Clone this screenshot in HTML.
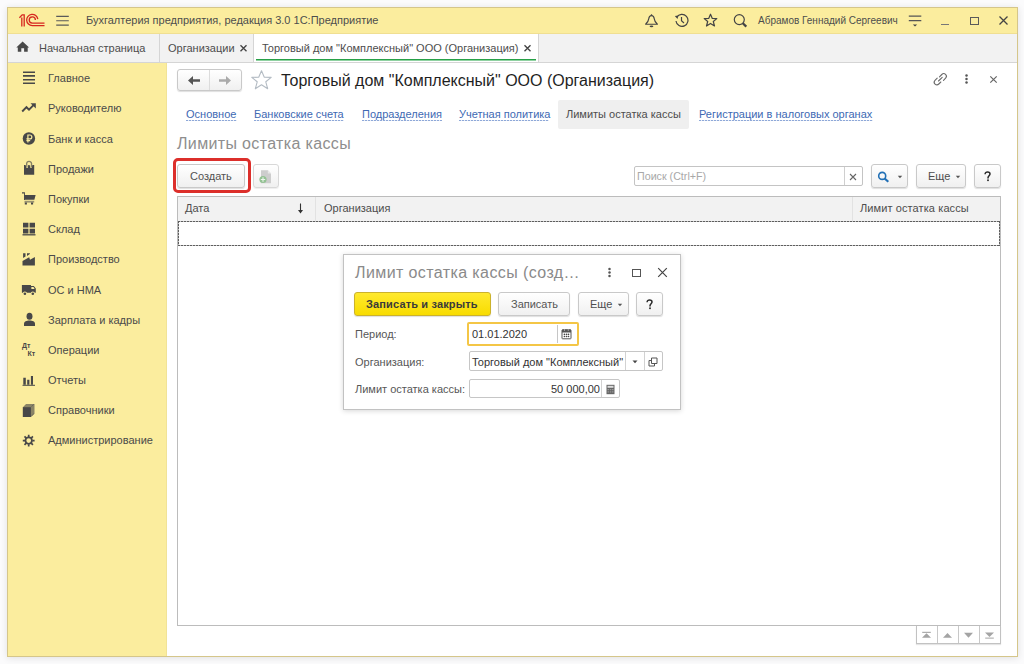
<!DOCTYPE html>
<html><head><meta charset="utf-8">
<style>
*{box-sizing:border-box;margin:0;padding:0}
html,body{width:1024px;height:664px;overflow:hidden;background:#fbfbfc;font-family:"Liberation Sans",sans-serif;color:#4d4d4d}
body{position:relative}
div,span,svg{position:absolute}
.t{white-space:nowrap;font-size:11px;line-height:13px}
.h{white-space:nowrap;font-size:16px;line-height:20px}
.si{left:48px;font-size:11px;line-height:13px;color:#4a4a4a;white-space:nowrap}
.btn{border:1px solid #c9c9c9;border-radius:3px;background:linear-gradient(#ffffff,#f0f0f0);box-shadow:0 1px 1px rgba(0,0,0,0.13)}
.lnk{font-size:11px;line-height:13px;color:#4069b3;white-space:nowrap}
.ul{height:1px;background:repeating-linear-gradient(90deg,#8ea8d8 0 2px,#e6ecf7 2px 3px)}
.vl{width:1px}
</style></head><body>
<!-- window frame -->
<div style="left:7px;top:7px;width:1011px;height:650px;border:1px solid #d5c68a;background:#fff;box-shadow:0 1px 7px rgba(0,0,0,0.11)"></div>
<!-- title bar -->
<div style="left:8px;top:8px;width:1009px;height:26px;background:#fbed9e;border-bottom:1px solid #f0df92"></div>
<!-- tabs bar -->
<div style="left:8px;top:34px;width:1009px;height:29px;background:#f2f2f2;border-bottom:1px solid #d5d5d5"></div>
<!-- sidebar -->
<div style="left:8px;top:63px;width:159px;height:593px;background:#fbed9e;border-right:1px solid #f1e397"></div>

<!-- title content -->
<svg style="left:17px;top:12px" width="30" height="17" viewBox="0 0 30 17">
 <g fill="none" stroke="#d6261f" stroke-width="1.3">
  <path d="M2.4 5.8 L5.2 2.8 L7.2 2.8 L7.2 14.4"/>
  <path d="M4.8 5.4 L4.8 14.4"/>
  <path d="M20.8 7.2 A5.6 5.6 0 1 0 15.3 13.6 L27.5 13.6"/>
  <path d="M18.4 7.9 A3.1 3.1 0 1 0 15.3 11.1 L27.5 11.1"/>
 </g>
</svg>
<svg style="left:55px;top:14px" width="15" height="13" viewBox="0 0 15 13">
 <g stroke="#5a5a5a" stroke-width="1.15"><path d="M1.2 2.4H13.8M1.2 6.7H13.8M1.2 11.1H13.8"/></g>
</svg>
<div class="t" style="left:86px;top:14px;color:#4d4d4d">Бухгалтерия предприятия, редакция 3.0 1С:Предприятие</div>

<!-- bell -->
<svg style="left:644px;top:13px" width="15" height="15" viewBox="0 0 15 15"><path d="M7.5 2.6 C5.6 2.6 5 3.8 4.8 5.6 C4.5 8.2 3.4 9.6 1.6 11.2 H13.4 C11.6 9.6 10.5 8.2 10.2 5.6 C10 3.8 9.4 2.6 7.5 2.6Z" fill="none" stroke="#444" stroke-width="1.15" stroke-linejoin="round"/><path d="M6.4 2.2 L7.5 0.9 L8.6 2.2Z" fill="#444"/><ellipse cx="7.5" cy="13.3" rx="1.9" ry="0.85" fill="#444"/></svg>
<!-- history -->
<svg style="left:674px;top:13px" width="15" height="15" viewBox="0 0 15 15">
 <g fill="none" stroke="#444" stroke-width="1.2"><path d="M2.8 4.3 A6 6 0 1 1 2 8"/><path d="M7.5 4 V7.8 L10 10"/></g>
 <path d="M0.8 3 L4.3 2.6 L3.5 6Z" fill="#444"/>
</svg>
<!-- star -->
<svg style="left:703px;top:13px" width="15" height="15" viewBox="0 0 15 15">
 <path d="M7.5 1.2 L9.3 5.4 L13.8 5.6 L10.3 8.5 L11.5 13 L7.5 10.4 L3.5 13 L4.7 8.5 L1.2 5.6 L5.7 5.4Z" fill="none" stroke="#444" stroke-width="1.2" stroke-linejoin="round"/>
</svg>
<!-- search -->
<svg style="left:733px;top:13px" width="15" height="15" viewBox="0 0 15 15">
 <circle cx="6.3" cy="6.6" r="5" fill="none" stroke="#444" stroke-width="1.2"/>
 <path d="M9.8 10.2 L13.3 13.6" stroke="#444" stroke-width="2.2"/>
</svg>
<div class="t" style="left:758px;top:15px;font-size:10px;line-height:12px;color:#4d4d4d">Абрамов Геннадий Сергеевич</div>
<!-- menu -->
<svg style="left:907px;top:13px" width="16" height="15" viewBox="0 0 16 15">
 <g stroke="#555" stroke-width="1.2"><path d="M1.8 3.2H14.3M1.8 7.6H14.3"/></g>
 <path d="M5.8 11.4 H10.2 L8 13.6Z" fill="#444"/>
</svg>
<!-- minimize -->
<div style="left:941px;top:23.5px;width:8px;height:1.5px;background:#777"></div>
<!-- maximize -->
<div style="left:970px;top:17px;width:9px;height:8px;border:1.3px solid #5a5a5a"></div>
<!-- close -->
<svg style="left:998px;top:15px" width="11" height="11" viewBox="0 0 11 11">
 <path d="M1.5 1.5 L9.5 9.5 M9.5 1.5 L1.5 9.5" stroke="#444" stroke-width="1.3"/>
</svg>

<!-- tabs -->
<svg style="left:16px;top:41px" width="14" height="12" viewBox="0 0 14 12">
 <path d="M6.6 0.6 L13.1 6.6 H11.7 V10.7 H8.1 V7.3 H5.3 V10.7 H1.8 V6.6 H0.3Z" fill="#484848"/>
</svg>
<div class="t" style="left:39px;top:42px;color:#4d4d4d">Начальная страница</div>
<div class="vl" style="left:159px;top:34px;height:28px;background:#d5d5d5"></div>
<div class="t" style="left:168px;top:42px">Организации</div>
<svg style="left:239px;top:44px" width="9" height="9" viewBox="0 0 9 9"><path d="M1.5 1.2L7.5 7.2M7.5 1.2L1.5 7.2" stroke="#444" stroke-width="1.35"/></svg>
<div style="left:253px;top:34px;width:286px;height:28px;background:#fff;border-left:1px solid #d5d5d5;border-right:1px solid #d5d5d5"></div>
<div style="left:256px;top:59px;width:280px;height:1px;background:#27a047"></div><div style="left:256px;top:60px;width:280px;height:1px;background:#8fd1a1"></div>
<div class="t" style="left:262px;top:42px">Торговый дом "Комплексный" ООО (Организация)</div>
<svg style="left:523px;top:44px" width="9" height="9" viewBox="0 0 9 9"><path d="M1.5 1.2L7.5 7.2M7.5 1.2L1.5 7.2" stroke="#444" stroke-width="1.35"/></svg>

<!-- sidebar items -->
<svg style="left:22px;top:71px" width="14" height="14" viewBox="0 0 14 14"><g stroke="#484848" stroke-width="1.6"><path d="M1 1.2H13M1 4.9H13M1 8.7H13M1 12.3H13"/></g></svg>
<div class="si" style="top:72px">Главное</div>
<svg style="left:21px;top:102px" width="16" height="11" viewBox="0 0 16 11"><path d="M1.2 9.5 L5.5 5.2 L8 7.6 L13 2.6" fill="none" stroke="#484848" stroke-width="1.9"/><path d="M9.5 1.2 H14.8 V6.5Z" fill="#484848"/></svg>
<div class="si" style="top:102px">Руководителю</div>
<svg style="left:22px;top:131px" width="14" height="15" viewBox="0 0 14 15"><circle cx="6.9" cy="7.5" r="6.2" fill="#484848"/><g fill="none" stroke="#fbed9e" stroke-width="1.2"><path d="M5.9 11.6 V4 H7.9 A1.95 1.95 0 0 1 7.9 7.9 H4.4 M4.4 9.6 H8.2"/></g></svg>
<div class="si" style="top:133px">Банк и касса</div>
<svg style="left:23px;top:160px" width="13" height="16" viewBox="0 0 13 16"><path d="M1 5.1 H2.6 L3.4 8 H4.9 L5.2 5.1 H6.6 L7.4 8 H8.9 L9.3 5.1 H11.2 V14.7 H1Z" fill="#484848"/><path d="M4 7.6 L3.6 3.6 Q3.8 1.3 6 1.3 Q8.2 1.3 8.6 3.6 L8.2 7.6" fill="none" stroke="#858064" stroke-width="1.3"/></svg>
<div class="si" style="top:163px">Продажи</div>
<svg style="left:21px;top:191px" width="16" height="15" viewBox="0 0 16 15"><path d="M1 1.2 H3.9 V9 H3 V2.5 H1Z" fill="#484848"/><path d="M3.1 4 H14.6 L13.4 8.8 H3.1Z" fill="#484848"/><path d="M3.5 9.8 H13.2 V11.6 H3.5Z" fill="#9a9370"/><path d="M3.8 11.4 H5.9 V13.6 H3.8Z M10 11.4 H12.1 V13.6 H10Z" fill="#484848"/></svg>
<div class="si" style="top:193px">Покупки</div>
<svg style="left:22px;top:222px" width="14" height="14" viewBox="0 0 14 14"><path d="M1 0.8 H6.4 V5.6 H1Z M7.6 0.8 H13 V5.6 H7.6Z M1 6.8 H6.4 V11.4 H1Z M7.6 6.8 H13 V11.4 H7.6Z" fill="#484848"/><path d="M0.5 12.8 H13.5" stroke="#484848" stroke-width="1.3"/></svg>
<div class="si" style="top:223px">Склад</div>
<svg style="left:22px;top:252px" width="14" height="14" viewBox="0 0 14 14"><path d="M0.5 9 L7.2 5.2 L8 7.7 L12.9 5 V13.4 H0.5Z" fill="#484848"/><path d="M1.1 1.2 H3.5 V4.6 L1.1 5.9Z M5 1.2 H7.9 V1.9 L5 3.9Z" fill="#484848"/></svg>
<div class="si" style="top:253px">Производство</div>
<svg style="left:21px;top:284px" width="16" height="12" viewBox="0 0 16 12"><path d="M0.9 1.1 H9.95 V2 H12.8 L14.8 4.5 V8.65 H0.9Z" fill="#484848"/><path d="M10.4 2.9 H12.5 L13.6 5 H10.4Z" fill="#fbed9e"/><circle cx="3.9" cy="9.7" r="2.1" fill="#fbed9e"/><circle cx="11.8" cy="9.7" r="2.1" fill="#fbed9e"/><circle cx="3.9" cy="9.7" r="1.3" fill="#484848"/><circle cx="11.8" cy="9.7" r="1.3" fill="#484848"/></svg>
<div class="si" style="top:284px">ОС и НМА</div>
<svg style="left:23px;top:312px" width="13" height="15" viewBox="0 0 13 15"><ellipse cx="6.5" cy="4.3" rx="3" ry="3.5" fill="#484848"/><path d="M1 14 V11.8 C1 9.5 3.5 8.6 6.5 8.6 C9.5 8.6 12 9.5 12 11.8 V14Z" fill="#484848"/></svg>
<div class="si" style="top:314px">Зарплата и кадры</div>
<div style="left:22px;top:342px;font:bold 7px/8px 'Liberation Sans';color:#484848">Дт</div>
<div style="left:27.5px;top:350px;font:bold 7px/8px 'Liberation Sans';color:#484848">Кт</div>
<div class="si" style="top:344px">Операции</div>
<svg style="left:22px;top:374px" width="14" height="12" viewBox="0 0 14 12"><path d="M1.3 3.8 H3.8 V10.8 H1.3Z M5.2 5.8 H7.4 V10.8 H5.2Z M8.9 2.1 H11 V10.8 H8.9Z" fill="#484848"/><path d="M0.5 11.3 H13" stroke="#484848" stroke-width="1"/></svg>
<div class="si" style="top:374px">Отчеты</div>
<svg style="left:22px;top:403px" width="14" height="15" viewBox="0 0 14 15"><path d="M0.9 4.2 H8.9 V14 H0.9Z" fill="#484848"/><path d="M0.9 4.2 L4 1 H12.5 V10.8 L8.9 14 Z" fill="#8a8466"/><path d="M0.9 4.2 H8.9 V14 H0.9Z" fill="#484848"/><path d="M9.5 3.5 L11.8 1.3 M9.5 13 L11.8 10.8" stroke="#555" stroke-width="0.6"/></svg>
<div class="si" style="top:404px">Справочники</div>
<svg style="left:22px;top:434px" width="14" height="14" viewBox="0 0 14 14"><circle cx="6.7" cy="6.6" r="3.2" fill="none" stroke="#484848" stroke-width="1.7"/><g stroke="#484848" stroke-width="1.7"><path d="M6.7 0.7V3M6.7 10.2V12.5M0.8 6.6H3.1M10.3 6.6H12.6M2.5 2.4L4.2 4.1M9.2 9.1L10.9 10.8M2.5 10.8L4.2 9.1M9.2 4.1L10.9 2.4"/></g></svg>
<div class="si" style="top:434px">Администрирование</div>

<!-- content header -->
<div class="btn" style="left:177px;top:69px;width:65px;height:22px"></div>
<div class="vl" style="left:209px;top:70px;height:20px;background:#dcdcdc"></div>
<svg style="left:187px;top:75px" width="14" height="11" viewBox="0 0 14 11"><path d="M1 5.5 L6 1 V4.2 H13 V6.8 H6 V10Z" fill="#555"/></svg>
<svg style="left:218px;top:75px" width="14" height="11" viewBox="0 0 14 11"><path d="M13 5.5 L8 1 V4.2 H1 V6.8 H8 V10Z" fill="#aaa"/></svg>
<svg style="left:250px;top:69px" width="23" height="22" viewBox="0 0 23 22"><path d="M11.5 1.8 L14.3 8.2 L21.2 8.4 L15.8 12.8 L17.7 19.8 L11.5 15.8 L5.3 19.8 L7.2 12.8 L1.8 8.4 L8.7 8.2Z" fill="none" stroke="#b4bcc4" stroke-width="1.1" stroke-linejoin="round"/></svg>
<div class="h" style="left:281px;top:71px;color:#1f1f1f">Торговый дом "Комплексный" ООО (Организация)</div>
<svg style="left:932px;top:72px" width="17" height="15" viewBox="0 0 17 15"><g fill="none" stroke="#6a6a6a" stroke-width="1.1" stroke-linecap="round"><path d="M7.5 4.8 L9.8 2.5 A2.6 2.6 0 0 1 13.6 6.2 L11.5 8.3"/><path d="M8.8 10 L6.8 12 A2.6 2.6 0 0 1 3 8.3 L5.2 6.1"/><path d="M6.5 9 L10.2 5.3"/></g></svg>
<svg style="left:964px;top:73px" width="5" height="12" viewBox="0 0 5 12"><g fill="#555"><circle cx="2.5" cy="2.5" r="1.25"/><circle cx="2.5" cy="6" r="1.25"/><circle cx="2.5" cy="9.5" r="1.25"/></g></svg>
<svg style="left:989px;top:75px" width="9" height="9" viewBox="0 0 9 9"><path d="M1.3 1.3L7.7 7.7M7.7 1.3L1.3 7.7" stroke="#666" stroke-width="1.2"/></svg>

<!-- links -->
<div class="lnk" style="left:186px;top:108px">Основное</div><div class="ul" style="left:186px;top:120px;width:51px"></div>
<div class="lnk" style="left:254px;top:108px">Банковские счета</div><div class="ul" style="left:254px;top:120px;width:90px"></div>
<div class="lnk" style="left:362px;top:108px">Подразделения</div><div class="ul" style="left:362px;top:120px;width:80px"></div>
<div class="lnk" style="left:459px;top:108px">Учетная политика</div><div class="ul" style="left:459px;top:120px;width:90px"></div>
<div style="left:558px;top:100px;width:131px;height:29px;background:#efefef;border-radius:2px"></div>
<div class="t" style="left:566px;top:108px;color:#4d4d4d">Лимиты остатка кассы</div>
<div class="lnk" style="left:699px;top:108px">Регистрации в налоговых органах</div><div class="ul" style="left:699px;top:120px;width:174px"></div>

<div class="h" style="left:177px;top:134px;color:#8e8e8e;letter-spacing:0.35px">Лимиты остатка кассы</div>

<!-- toolbar -->
<div style="left:173px;top:158px;width:78px;height:35px;border:3px solid #dc2f2b;border-radius:5px"></div>
<div class="btn" style="left:177px;top:164px;width:68px;height:24px"></div>
<div class="t" style="left:190px;top:170px;color:#525252">Создать</div>
<div class="btn" style="left:253px;top:164px;width:26px;height:24px;border-color:#d8d8d8;box-shadow:0 1px 1px rgba(0,0,0,0.07)"></div>
<svg style="left:258px;top:169px" width="16" height="16" viewBox="0 0 16 16"><path d="M3 1.2 H9.8 L13 4.4 V14.2 H3Z" fill="#cdcdcd"/><path d="M9.8 1.2 V4.4 H13Z" fill="#e8e8e8"/><circle cx="5" cy="10.5" r="3.6" fill="#93c293"/><path d="M5 8.3 V12.7 M2.8 10.5 H7.2" stroke="#eef6ee" stroke-width="1.1"/></svg>

<div style="left:634px;top:166px;width:229px;height:20px;border:1px solid #c4c4c4;border-radius:2px;background:#fff"></div>
<div class="vl" style="left:844px;top:167px;height:18px;background:#cfcfcf"></div>
<div class="t" style="left:637px;top:170px;font-size:10.7px;color:#a8a8a8">Поиск (Ctrl+F)</div>
<svg style="left:849px;top:173px" width="8" height="8" viewBox="0 0 8 8"><path d="M1 1L7 7M7 1L1 7" stroke="#666" stroke-width="1.1"/></svg>
<div class="btn" style="left:871px;top:164px;width:37px;height:24px"></div>
<svg style="left:877px;top:171px" width="13" height="12" viewBox="0 0 13 12"><circle cx="5.2" cy="4.9" r="3.5" fill="none" stroke="#2270b6" stroke-width="1.6"/><path d="M7.6 7.5 L11.3 10.8" stroke="#2270b6" stroke-width="2.2"/></svg>
<svg style="left:897px;top:175px" width="6" height="4" viewBox="0 0 6 4"><path d="M0.8 0.8H5.2L3 3.2Z" fill="#555"/></svg>
<div class="btn" style="left:916px;top:164px;width:50px;height:24px"></div>
<div class="t" style="left:928px;top:170px;color:#4d4d4d">Еще</div>
<svg style="left:955px;top:175px" width="6" height="4" viewBox="0 0 6 4"><path d="M0.8 0.8H5.2L3 3.2Z" fill="#555"/></svg>
<div class="btn" style="left:974px;top:164px;width:27px;height:24px"></div>
<svg style="left:983px;top:171px" width="9" height="11" viewBox="0 0 9 11"><path d="M2.1 3.2 C2.1 1.7 3.2 0.9 4.6 0.9 C6 0.9 7 1.8 7 3 C7 4.6 5 4.9 5 6.9 V7.5" fill="none" stroke="#2a2a2a" stroke-width="1.5"/><circle cx="5" cy="9.2" r="0.95" fill="#2a2a2a"/></svg>

<!-- table -->
<div style="left:177px;top:196px;width:824px;height:430px;border:1px solid #bcbcbc;background:#fff"></div>
<div style="left:178px;top:197px;width:822px;height:24px;background:#f2f2f2"></div>
<div class="vl" style="left:315px;top:197px;height:24px;background:#e2e2e2"></div>
<div class="vl" style="left:852px;top:197px;height:24px;background:#e2e2e2"></div>
<div class="t" style="left:185px;top:202px">Дата</div>
<svg style="left:297px;top:203px" width="7" height="11" viewBox="0 0 7 11"><path d="M3.5 0.5 V9" stroke="#333" stroke-width="1.1"/><path d="M1 7 H6 L3.5 10.5Z" fill="#333"/></svg>
<div class="t" style="left:324px;top:202px">Организация</div>
<div class="t" style="left:860px;top:202px;letter-spacing:0.1px">Лимит остатка кассы</div>
<div style="left:178px;top:221px;width:822px;height:1px;background:repeating-linear-gradient(90deg,#5e5e5e 0 2px,#c4c4c4 2px 3px)"></div>
<div style="left:178px;top:245px;width:822px;height:1px;background:repeating-linear-gradient(90deg,#5e5e5e 0 2px,#c4c4c4 2px 3px)"></div>
<div style="left:178px;top:221px;width:1px;height:25px;background:repeating-linear-gradient(180deg,#5e5e5e 0 2px,#c4c4c4 2px 3px)"></div>
<div style="left:999px;top:221px;width:1px;height:25px;background:repeating-linear-gradient(180deg,#5e5e5e 0 2px,#c4c4c4 2px 3px)"></div>

<!-- nav buttons -->
<div style="left:916px;top:626px;width:85px;height:18px;border:1px solid #c2c2c2;border-top:none;background:#fff;box-shadow:0 1px 1px rgba(0,0,0,0.1)"></div>
<div class="vl" style="left:937px;top:626px;height:17px;background:#c8c8c8"></div>
<div class="vl" style="left:958px;top:626px;height:17px;background:#c8c8c8"></div>
<div class="vl" style="left:979px;top:626px;height:17px;background:#c8c8c8"></div>
<svg style="left:921px;top:631px" width="11" height="8" viewBox="0 0 11 8"><path d="M1.2 0.8H9.8V1.9H1.2Z" fill="#a4a4a4"/><path d="M1 6.8 L5.5 2.2 L10 6.8Z" fill="#a4a4a4"/></svg>
<svg style="left:942px;top:631px" width="11" height="8" viewBox="0 0 11 8"><path d="M1 6.8 L5.5 2 L10 6.8Z" fill="#a4a4a4"/></svg>
<svg style="left:963px;top:631px" width="11" height="8" viewBox="0 0 11 8"><path d="M1 1.8 L5.5 6.8 L10 1.8Z" fill="#a4a4a4"/></svg>
<svg style="left:984px;top:631px" width="11" height="8" viewBox="0 0 11 8"><path d="M1 1.6 L5.5 6.1 L10 1.6Z" fill="#a4a4a4"/><path d="M1.2 6.6H9.8V7.6H1.2Z" fill="#a4a4a4"/></svg>

<!-- dialog -->
<div style="left:343px;top:254px;width:338px;height:156px;border:1px solid #c2c2c2;background:#fff;box-shadow:0 1px 5px rgba(0,0,0,0.16)"></div>
<div class="h" style="left:355px;top:263px;color:#8a8a8a;letter-spacing:0.4px">Лимит остатка кассы (созд…</div>
<svg style="left:607px;top:267px" width="5" height="11" viewBox="0 0 5 11"><g fill="#555"><circle cx="2.5" cy="2" r="1.25"/><circle cx="2.5" cy="5.5" r="1.25"/><circle cx="2.5" cy="9" r="1.25"/></g></svg>
<div style="left:632px;top:269px;width:9px;height:8px;border:1.3px solid #555"></div>
<svg style="left:657px;top:267px" width="11" height="11" viewBox="0 0 11 11"><path d="M1.2 1.2L9.8 9.8M9.8 1.2L1.2 9.8" stroke="#444" stroke-width="1.2"/></svg>

<div style="left:354px;top:292px;width:137px;height:24px;border:1px solid #cbb22c;border-radius:3px;background:linear-gradient(#ffe92e,#f8dc00);box-shadow:0 1px 1px rgba(0,0,0,0.13)"></div>
<div class="t" style="left:366px;top:298px;font-weight:bold;color:#3a3a3a;letter-spacing:0.15px">Записать и закрыть</div>
<div class="btn" style="left:498px;top:292px;width:72px;height:24px"></div>
<div class="t" style="left:511px;top:298px;color:#555">Записать</div>
<div class="btn" style="left:578px;top:292px;width:51px;height:24px"></div>
<div class="t" style="left:590px;top:298px">Еще</div>
<svg style="left:617px;top:303px" width="6" height="4" viewBox="0 0 6 4"><path d="M0.8 0.8H5.2L3 3.2Z" fill="#555"/></svg>
<div class="btn" style="left:636px;top:292px;width:27px;height:24px"></div>
<svg style="left:645px;top:299px" width="9" height="11" viewBox="0 0 9 11"><path d="M2.1 3.2 C2.1 1.7 3.2 0.9 4.6 0.9 C6 0.9 7 1.8 7 3 C7 4.6 5 4.9 5 6.9 V7.5" fill="none" stroke="#2a2a2a" stroke-width="1.5"/><circle cx="5" cy="9.2" r="0.95" fill="#2a2a2a"/></svg>

<div class="t" style="left:355px;top:328px;color:#575757">Период:</div>
<div style="left:467px;top:322px;width:112px;height:24px;border:2px solid #f4c646;border-radius:2px;background:#fff"></div>
<div class="vl" style="left:557px;top:325px;height:18px;background:#c6c6c6"></div>
<div class="t" style="left:472px;top:328px;color:#333">01.01.2020</div>
<svg style="left:561px;top:328px" width="11" height="12" viewBox="0 0 11 12"><path d="M1.6 1.8 H9.4 Q10 1.8 10 2.4 V10.2 Q10 10.8 9.4 10.8 H1.6 Q1 10.8 1 10.2 V2.4 Q1 1.8 1.6 1.8Z" fill="none" stroke="#555" stroke-width="1"/><path d="M1 2.2 Q1 1.6 1.6 1.6 H9.4 Q10 1.6 10 2.2 V4.6 H1Z" fill="#555"/><path d="M3.5 1 V3 M7.3 1 V3" stroke="#aaa" stroke-width="0.9"/><g fill="#444"><circle cx="3.4" cy="6.4" r="0.8"/><circle cx="5.5" cy="6.4" r="0.8"/><circle cx="7.5" cy="6.4" r="0.8"/><circle cx="3.4" cy="8.5" r="0.8"/><circle cx="5.5" cy="8.5" r="0.8"/><circle cx="7.5" cy="8.5" r="0.8"/></g></svg>

<div class="t" style="left:355px;top:356px;color:#575757">Организация:</div>
<div style="left:469px;top:351px;width:194px;height:20px;border:1px solid #c6c6c6;border-radius:2px;background:#fff"></div>
<div class="vl" style="left:625px;top:352px;height:18px;background:#d2d2d2"></div>
<div class="vl" style="left:644px;top:352px;height:18px;background:#d2d2d2"></div>
<div class="t" style="left:472px;top:356px;color:#333">Торговый дом "Комплексный"</div>
<svg style="left:632px;top:360px" width="6" height="4" viewBox="0 0 6 4"><path d="M0.5 0.5H5.5L3 3.3Z" fill="#444"/></svg>
<svg style="left:648px;top:357px" width="10" height="10" viewBox="0 0 10 10"><g fill="none" stroke="#555" stroke-width="1"><path d="M3.5 1H9V6.5H3.5Z"/><path d="M3.5 3.5H1V9H6.5V6.5"/></g></svg>

<div class="t" style="left:355px;top:383px;color:#575757">Лимит остатка кассы:</div>
<div style="left:469px;top:379px;width:151px;height:19px;border:1px solid #c6c6c6;border-radius:2px;background:#fff"></div>
<div class="vl" style="left:601px;top:380px;height:17px;background:#d2d2d2"></div>
<div class="t" style="left:551px;top:383px;color:#333">50 000,00</div>
<svg style="left:605px;top:384px" width="11" height="11" viewBox="0 0 11 11"><path d="M1.5 0.8H9.5V10.2H1.5Z" fill="#666"/><path d="M2.5 1.8H8.5V3.8H2.5Z" fill="#ddd"/><g fill="#999"><rect x="2.5" y="5" width="1.5" height="1.2"/><rect x="4.8" y="5" width="1.5" height="1.2"/><rect x="7" y="5" width="1.5" height="1.2"/><rect x="2.5" y="7.3" width="1.5" height="1.2"/><rect x="4.8" y="7.3" width="1.5" height="1.2"/><rect x="7" y="7.3" width="1.5" height="1.2"/></g></svg>
</body></html>
